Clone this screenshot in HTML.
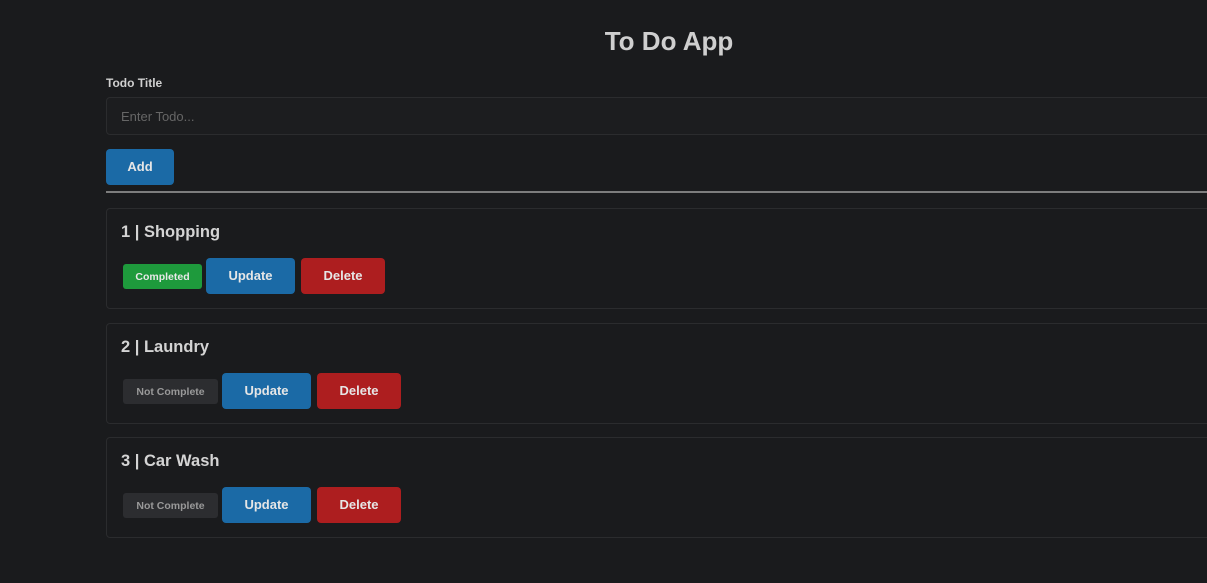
<!DOCTYPE html>
<html><head><style>
body{margin:0;width:1207px;height:583px;background:#1a1b1d;font-family:"Liberation Sans",sans-serif;color:#d0d0d0;position:relative;overflow:hidden}
.a{position:absolute}
h1{position:absolute;left:540px;width:258px;text-align:center;top:26px;margin:0;font-size:26px;font-weight:bold;color:#cfcfcf}
.lbl{left:106px;top:76px;font-size:12px;font-weight:bold}
.inp{left:106px;top:97px;width:1110px;height:38px;border:1px solid #2b2c2e;border-radius:4px;box-sizing:border-box;background:#1c1d1f;color:#666;font-size:13px;line-height:38px;padding-left:14px}
.btn{position:absolute;border-radius:4px;color:#e6e6e6;font-size:13px;font-weight:bold;text-align:center;line-height:36px;height:36px}
.blue{background:#1b6aa6}.red{background:#ad1e1f}
.hr{left:106px;top:191px;width:1110px;height:2px;background:#7d7d7d}
.card{position:absolute;left:106px;width:1110px;height:101px;border:1px solid #2b2c2e;border-radius:4px;box-sizing:border-box}
.card .t{position:absolute;left:14px;top:14px;font-size:16.5px;font-weight:bold;color:#d4d4d4}
.badge{position:absolute;height:25px;line-height:27px;border-radius:3px;font-size:10.5px;font-weight:bold;text-align:center}
.g{background:#1e9a3c;color:#e8e8e8}.n{background:#2c2d30;color:#999}
</style></head><body>
<h1>To Do App</h1>
<div class="a lbl">Todo Title</div>
<div class="a inp">Enter Todo...</div>
<div class="btn blue" style="left:106px;top:149px;width:68px">Add</div>
<div class="a hr"></div>

<div class="card" style="top:208px"><div class="t">1 | Shopping</div>
<div class="badge g" style="left:16px;top:55px;width:79px">Completed</div>
<div class="btn blue" style="left:99px;top:49px;width:89px">Update</div>
<div class="btn red" style="left:194px;top:49px;width:84px">Delete</div></div>

<div class="card" style="top:323px"><div class="t">2 | Laundry</div>
<div class="badge n" style="left:16px;top:55px;width:95px">Not Complete</div>
<div class="btn blue" style="left:115px;top:49px;width:89px">Update</div>
<div class="btn red" style="left:210px;top:49px;width:84px">Delete</div></div>

<div class="card" style="top:437px"><div class="t">3 | Car Wash</div>
<div class="badge n" style="left:16px;top:55px;width:95px">Not Complete</div>
<div class="btn blue" style="left:115px;top:49px;width:89px">Update</div>
<div class="btn red" style="left:210px;top:49px;width:84px">Delete</div></div>
</body></html>
